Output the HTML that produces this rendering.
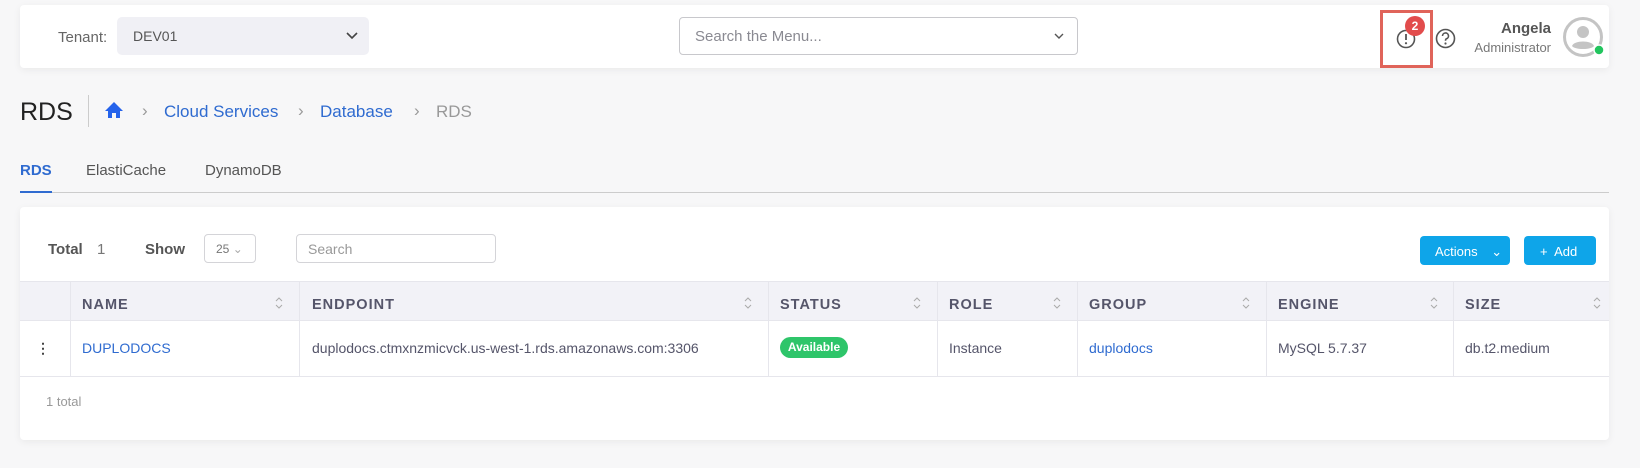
<!DOCTYPE html>
<html><head><style>
*{box-sizing:border-box;margin:0;padding:0}
body{width:1640px;height:468px;background:#f7f7f8;font-family:"Liberation Sans",sans-serif;position:relative;overflow:hidden;color:#4a4a55}
.abs{position:absolute}
.card{position:absolute;background:#fff;border-radius:4px;box-shadow:0 2px 8px rgba(0,0,0,.06)}
.th{position:absolute;top:285px;height:40px;line-height:40px;font-size:14.5px;letter-spacing:1px;color:#55556a;font-weight:600}
.td{position:absolute;top:321px;height:55px;line-height:55px;font-size:14px;color:#55556a}
.sep{position:absolute;top:281px;height:95px;width:1px;background:#e6e6ec}
.sort{position:absolute;top:296px;width:8px;height:14px}
a{color:#2f6bd0;text-decoration:none}
</style></head><body>
<div class="card" style="left:20px;top:5px;width:1589px;height:63px"></div>
<div class="abs" style="left:58px;top:29px;font-size:15px;color:#666">Tenant:</div>
<div class="abs" style="left:117px;top:17px;width:252px;height:38px;background:#f0f0f5;border-radius:5px"></div>
<div class="abs" style="left:133px;top:28px;font-size:14px;color:#555">DEV01</div>
<svg class="abs" style="left:346px;top:31px" width="12" height="10"><path d="M1 2l5 5 5-5" stroke="#444" stroke-width="1.6" fill="none"/></svg>
<div class="abs" style="left:679px;top:17px;width:399px;height:38px;border:1px solid #c8c8cc;border-radius:4px;background:#fff"></div>
<div class="abs" style="left:695px;top:28px;font-size:15px;color:#8a8a92">Search the Menu...</div>
<svg class="abs" style="left:1054px;top:33px" width="10" height="8"><path d="M1 1l4 4 4-4" stroke="#555" stroke-width="1.4" fill="none"/></svg>
<div class="abs" style="left:1380px;top:10px;width:53px;height:58px;border:3px solid #e0645a"></div>
<svg class="abs" style="left:1396px;top:29px" width="20" height="20"><circle cx="10" cy="10" r="8.5" stroke="#555" stroke-width="1.6" fill="none"/><path d="M10 5v6" stroke="#555" stroke-width="1.8"/><circle cx="10" cy="14.2" r="1.1" fill="#555"/></svg>
<div class="abs" style="left:1405px;top:16px;width:20px;height:20px;border-radius:50%;background:#e24c4c;color:#fff;font-size:12px;font-weight:bold;text-align:center;line-height:20px">2</div>
<svg class="abs" style="left:1435px;top:28px" width="21" height="21"><circle cx="10.5" cy="10.5" r="9" stroke="#555" stroke-width="1.6" fill="none"/><path d="M7.5 8a3 3 0 1 1 4 2.8c-1 .4-1 1-1 2" stroke="#555" stroke-width="1.6" fill="none"/><circle cx="10.5" cy="15.5" r="1.1" fill="#555"/></svg>
<div class="abs" style="left:1460px;top:20px;width:91px;text-align:right;font-size:15px;font-weight:bold;color:#555">Angela</div>
<div class="abs" style="left:1440px;top:40px;width:111px;text-align:right;font-size:13px;color:#777">Administrator</div>
<svg class="abs" style="left:1562px;top:16px" width="44" height="44"><circle cx="21" cy="21" r="18.5" stroke="#c4c4c4" stroke-width="3" fill="#fff"/><circle cx="21" cy="16" r="6" fill="#c4c4c4"/><path d="M10 30c2-6 20-6 22 0c-3 4-19 4-22 0z" fill="#c4c4c4"/><circle cx="37" cy="34" r="5" fill="#22c55e" stroke="#fff" stroke-width="1.5"/></svg>

<div class="abs" style="left:20px;top:98px;font-size:25px;color:#222">RDS</div>
<div class="abs" style="left:88px;top:95px;width:1px;height:32px;background:#ccc"></div>
<svg class="abs" style="left:104px;top:101px" width="20" height="18"><path d="M10 1L1 10h3v7h4v-5h4v5h4v-7h3z" fill="#2563eb"/></svg>
<div class="abs" style="left:142px;top:101px;font-size:17px;color:#999">›</div>
<div class="abs" style="left:164px;top:102px;font-size:17px;color:#2f6bd0">Cloud Services</div>
<div class="abs" style="left:298px;top:101px;font-size:17px;color:#999">›</div>
<div class="abs" style="left:320px;top:102px;font-size:17px;color:#2f6bd0">Database</div>
<div class="abs" style="left:414px;top:101px;font-size:17px;color:#999">›</div>
<div class="abs" style="left:436px;top:102px;font-size:17px;color:#999">RDS</div>

<div class="abs" style="left:20px;top:162px;font-size:15px;color:#2f6bd0;font-weight:600">RDS</div>
<div class="abs" style="left:86px;top:162px;font-size:15px;color:#555">ElastiCache</div>
<div class="abs" style="left:205px;top:162px;font-size:15px;color:#555">DynamoDB</div>
<div class="abs" style="left:20px;top:192px;width:1589px;height:1px;background:#ccc"></div>
<div class="abs" style="left:20px;top:191px;width:32px;height:2px;background:#2f6bd0"></div>

<div class="card" style="left:20px;top:207px;width:1589px;height:233px"></div>
<div class="abs" style="left:48px;top:241px;font-size:15px;color:#555;font-weight:600">Total</div>
<div class="abs" style="left:97px;top:241px;font-size:15px;color:#777">1</div>
<div class="abs" style="left:145px;top:241px;font-size:15px;color:#555;font-weight:600">Show</div>
<div class="abs" style="left:204px;top:234px;width:52px;height:29px;border:1px solid #d4d4d8;border-radius:4px;font-size:12px;color:#777;padding:7px 0 0 11px">25 <span style="color:#aaa">⌄</span></div>
<div class="abs" style="left:296px;top:234px;width:200px;height:29px;border:1px solid #d4d4d8;border-radius:4px;font-size:14px;color:#999;padding:6px 0 0 11px">Search</div>
<div class="abs" style="left:1420px;top:236px;width:90px;height:29px;background:#0ea5e9;border-radius:4px;color:#fff;font-size:13px;padding:8px 0 0 15px">Actions <span style="margin-left:10px">⌄</span></div>
<div class="abs" style="left:1524px;top:236px;width:72px;height:29px;background:#0ea5e9;border-radius:4px;color:#fff;font-size:13px;padding:8px 0 0 16px">+&nbsp; Add</div>

<div class="abs" style="left:20px;top:281px;width:1589px;height:40px;background:#f2f2f7;border-top:1px solid #e6e6ec;border-bottom:1px solid #e6e6ec"></div>
<div class="abs" style="left:20px;top:376px;width:1589px;height:1px;background:#e6e6ec"></div>
<div class="sep" style="left:70px"></div><div class="sep" style="left:299px"></div><div class="sep" style="left:768px"></div><div class="sep" style="left:937px"></div><div class="sep" style="left:1077px"></div><div class="sep" style="left:1266px"></div><div class="sep" style="left:1453px"></div>
<div class="th" style="left:82px">NAME</div>
<div class="th" style="left:312px">ENDPOINT</div>
<div class="th" style="left:780px">STATUS</div>
<div class="th" style="left:949px">ROLE</div>
<div class="th" style="left:1089px">GROUP</div>
<div class="th" style="left:1278px">ENGINE</div>
<div class="th" style="left:1465px">SIZE</div>
<svg class="sort" style="left:275px"><path d="M1 5l3-3 3 3M1 9l3 3 3-3" stroke="#aaa" fill="none"/></svg>
<svg class="sort" style="left:744px"><path d="M1 5l3-3 3 3M1 9l3 3 3-3" stroke="#aaa" fill="none"/></svg>
<svg class="sort" style="left:913px"><path d="M1 5l3-3 3 3M1 9l3 3 3-3" stroke="#aaa" fill="none"/></svg>
<svg class="sort" style="left:1053px"><path d="M1 5l3-3 3 3M1 9l3 3 3-3" stroke="#aaa" fill="none"/></svg>
<svg class="sort" style="left:1242px"><path d="M1 5l3-3 3 3M1 9l3 3 3-3" stroke="#aaa" fill="none"/></svg>
<svg class="sort" style="left:1430px"><path d="M1 5l3-3 3 3M1 9l3 3 3-3" stroke="#aaa" fill="none"/></svg>
<svg class="sort" style="left:1593px"><path d="M1 5l3-3 3 3M1 9l3 3 3-3" stroke="#aaa" fill="none"/></svg>
<div class="td" style="left:36px;font-weight:bold;color:#444">⋮</div>
<div class="td" style="left:82px"><a>DUPLODOCS</a></div>
<div class="td" style="left:312px">duplodocs.ctmxnzmicvck.us-west-1.rds.amazonaws.com:3306</div>
<div class="abs" style="left:780px;top:337px;width:68px;height:21px;border-radius:11px;background:#2ec56a;color:#fff;font-size:12px;font-weight:bold;text-align:center;line-height:21px">Available</div>
<div class="td" style="left:949px">Instance</div>
<div class="td" style="left:1089px"><a>duplodocs</a></div>
<div class="td" style="left:1278px">MySQL 5.7.37</div>
<div class="td" style="left:1465px">db.t2.medium</div>
<div class="abs" style="left:46px;top:394px;font-size:13px;color:#999">1 total</div>
</body></html>
